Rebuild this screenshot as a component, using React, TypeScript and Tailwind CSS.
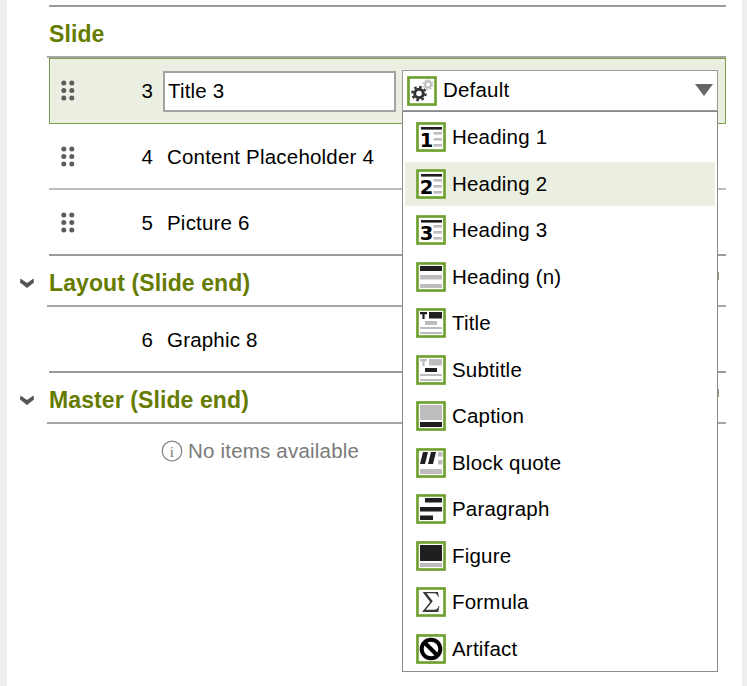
import React from "react";

const D = "#1f1f1f";
const G = "#bdbdbd";

function Frame({ children }: { children: React.ReactNode }) {
  return (
    <svg width="30" height="30" viewBox="0 0 30 30" className="shrink-0 block">
      <rect x="0" y="0" width="30" height="30" fill="#dfe8cf" />
      <rect x="1.500" y="1.500" width="27" height="27" fill="#fff" stroke="#6ea02d" strokeWidth="2.600" />
      {children}
    </svg>
  );
}

function Digit({ n }: { n: string }) {
  return (
    <Frame>
      <rect x="5" y="5" width="21" height="2.600" fill={D} />
      <text x="3.800" y="24.500" fontFamily="'DejaVu Sans', sans-serif" fontWeight="700" fontSize="19.500" fill="#000">{n}</text>
      <rect x="17.500" y="10" width="8.500" height="2.600" fill={G} />
      <rect x="17.500" y="16" width="8.500" height="2.600" fill={G} />
      <rect x="17.500" y="22" width="8.500" height="2.600" fill={G} />
    </Frame>
  );
}

function TitleIcon({ sub }: { sub?: boolean }) {
  const top = sub ? G : D;
  const mid = sub ? D : G;
  return (
    <Frame>
      <path d="M4 4h7v2.200H8.600V11H6.400V6.200H4z" fill={top} />
      <rect x="13" y="4" width="13" height="6.500" fill={top} />
      <rect x="9" y="13" width="12" height="4" fill={mid} />
      <rect x="4" y="19" width="22" height="2" fill={G} />
      <rect x="4" y="24" width="22" height="2" fill={G} />
    </Frame>
  );
}

const icons: Record<string, React.ReactNode> = {
  "Heading 1": <Digit n="1" />,
  "Heading 2": <Digit n="2" />,
  "Heading 3": <Digit n="3" />,
  "Heading (n)": (
    <Frame>
      <rect x="4" y="4" width="22" height="5" fill={D} />
      <rect x="4" y="13" width="22" height="4.500" fill={G} />
      <rect x="4" y="22" width="22" height="4" fill={G} />
    </Frame>
  ),
  Title: <TitleIcon />,
  Subtitle: <TitleIcon sub />,
  Caption: (
    <Frame>
      <rect x="4" y="4" width="22" height="15" fill={G} />
      <rect x="4" y="21" width="22" height="5" fill={D} />
    </Frame>
  ),
  "Block quote": (
    <Frame>
      <path d="M7 4h5l-3 12H4zM15 4h5l-3 12h-5z" fill={D} />
      <rect x="22" y="4" width="4.500" height="4.500" fill={G} />
      <rect x="22" y="12" width="4.500" height="4.500" fill={G} />
      <rect x="4" y="21" width="22" height="5" fill={G} />
    </Frame>
  ),
  Paragraph: (
    <Frame>
      <rect x="9" y="4" width="17" height="4.500" fill={D} />
      <rect x="4" y="13" width="22" height="4.500" fill={D} />
      <rect x="4" y="21.500" width="13" height="4.500" fill={D} />
    </Frame>
  ),
  Figure: (
    <Frame>
      <rect x="4" y="4" width="22" height="16" fill={D} />
      <rect x="4" y="22" width="22" height="4" fill={G} />
    </Frame>
  ),
  Formula: (
    <Frame>
      <path d="M7 5h15l.8 5h-.8c-.5-2.400-1.800-3.700-4-3.700h-7.500l6.300 8-7 8.400h8.500c2.400 0 3.700-1.200 4.300-3.700h.8l-1.200 6H6.500v-.6l7.600-9.300L7 5.600z" fill="#3a3a3a" />
    </Frame>
  ),
  Artifact: (
    <Frame>
      <circle cx="15" cy="15" r="9.300" fill="none" stroke="#000" strokeWidth="4" />
      <path d="M8.500 8.500l13 13" stroke="#000" strokeWidth="4" />
    </Frame>
  ),
};

const menuItems = Object.keys(icons);

function GearIcon() {
  return (
    <svg width="30" height="30" viewBox="0 0 30 30" className="shrink-0 block">
      <rect x="0" y="0" width="30" height="30" fill="#dfe8cf" />
      <rect x="1.500" y="1.500" width="27" height="27" fill="#fff" stroke="#6ea02d" strokeWidth="2.600" />
      <circle cx="21" cy="8.500" r="3" fill="none" stroke="#bdbdbd" strokeWidth="2" />
      <circle cx="21" cy="8.500" r="4.600" fill="none" stroke="#bdbdbd" strokeWidth="1.600" strokeDasharray="1.800 1.800" />
      <circle cx="12" cy="17.500" r="4.300" fill="none" stroke="#333" strokeWidth="3" />
      <circle cx="12" cy="17.500" r="6.600" fill="none" stroke="#333" strokeWidth="2.400" strokeDasharray="2.600 2.580" />
    </svg>
  );
}

function Handle() {
  return (
    <svg width="14" height="22" viewBox="0 0 14 22" className="block">
      {[3, 10.500, 18].map((y) =>
        [2.800, 10.800].map((x) => <circle key={`${x}-${y}`} cx={x} cy={y} r="2.500" fill="#5c5c5c" />)
      )}
    </svg>
  );
}

function Chevron() {
  return (
    <svg width="14" height="10" viewBox="0 0 14 10" className="block">
      <path d="M0.500 0.500L7 5l6.500-4.500L14 4.500 7 10 0 4.500z" fill="#555" />
    </svg>
  );
}

function SectionHead({ title, chevron, mark }: { title: string; chevron?: boolean; mark?: boolean }) {
  return (
    <div className="flex h-[51px]">
      <div className="w-[40px] flex items-center justify-end pr-[13px] pt-[3px]">{chevron && <Chevron />}</div>
      <div className="relative flex-1 flex items-center pl-[2px] pt-[6px] border-b-2 border-[#a6a6a8]">
        <span className="text-[23px] tracking-[0.1px] font-bold text-[#667c00]">{title}</span>
        {mark && <div className="absolute right-[7px] top-[16px] w-[2px] h-[8px] bg-[#8c9c74]" />}
      </div>
    </div>
  );
}

function Row({
  num,
  label,
  handle = true,
  border = "border-[#bdbdbd]",
}: {
  num: string;
  label: string;
  handle?: boolean;
  border?: string;
}) {
  return (
    <div className={`ml-[42px] h-[66px] flex items-center border-b-2 ${border}`}>
      <div className="w-[12px]" />
      <div className="w-[14px] pt-[2px]">{handle && <Handle />}</div>
      <div className="w-[78px] text-right pt-[2px]">{num}</div>
      <div className="ml-[14px] pt-[2px]">{label}</div>
    </div>
  );
}

export default function App() {
  return (
    <div className="w-[747px] h-[686px] flex overflow-hidden bg-white text-[20.500px] tracking-[0.2px] leading-none text-black font-['Liberation_Sans',Arial,sans-serif]">
      <div className="w-[7px] bg-[#eeeeee]" />
      <main className="flex-1 flex flex-col pr-[16px]">
        <div className="h-[5px]" />
        <div className="ml-[42px] h-[2px] bg-[#9a9a9c]" />
        <SectionHead title="Slide" />

        <div className="ml-[42px] h-[66px] flex items-center bg-[#ebefe1] border border-[#7a9f4a]">
          <div className="w-[11px]" />
          <div className="w-[14px]"><Handle /></div>
          <div className="w-[78px] text-right">3</div>
          <div className="ml-[10px] w-[233px] h-[41px] flex items-center pl-[3px] bg-white border-2 border-[#a3a3a3]">Title 3</div>
          <div className="relative ml-[6px] w-[316px] h-[42px] flex items-center pl-[4px] bg-white border border-[#999999] border-b-2">
            <GearIcon />
            <span className="ml-[6px]">Default</span>
            <svg width="18" height="12" viewBox="0 0 18 12" className="absolute right-[4px] top-[13px]">
              <path d="M0 0h18L9 12z" fill="#666" />
            </svg>
            <ul className="absolute z-10 left-[-1px] top-[40px] w-[316px] h-[561px] bg-white border border-[#8a8a8a] pt-[2px] px-[2px]">
              {menuItems.map((name) => (
                <li key={name} className="h-[46.500px] flex items-center">
                  <div
                    className={`w-full h-[44px] flex items-center pl-[11px] ${
                      name === "Heading 2" ? "bg-[#ebefe1]" : ""
                    }`}
                  >
                    {icons[name]}
                    <span className="ml-[6px]">{name}</span>
                  </div>
                </li>
              ))}
            </ul>
          </div>
        </div>

        <Row num="4" label="Content Placeholder 4" />
        <Row num="5" label="Picture 6" border="border-[#9a9a9c]" />
        <SectionHead title="Layout (Slide end)" chevron mark />
        <Row num="6" label="Graphic 8" handle={false} border="border-[#9a9a9c]" />
        <SectionHead title="Master (Slide end)" chevron mark />
        <div className="mt-[16px] ml-[154px] flex items-center text-[#7a7a7a]">
          <svg width="22" height="22" viewBox="0 0 22 22" className="block">
            <circle cx="11" cy="11" r="9.800" fill="none" stroke="#888" strokeWidth="1.300" />
            <text x="11" y="16.500" textAnchor="middle" fontFamily="'Liberation Serif', serif" fontSize="15" fill="#777">i</text>
          </svg>
          <span className="ml-[5px]">No items available</span>
        </div>
      </main>
      <div className="w-[5px] bg-[#eeeeee]" />
    </div>
  );
}
